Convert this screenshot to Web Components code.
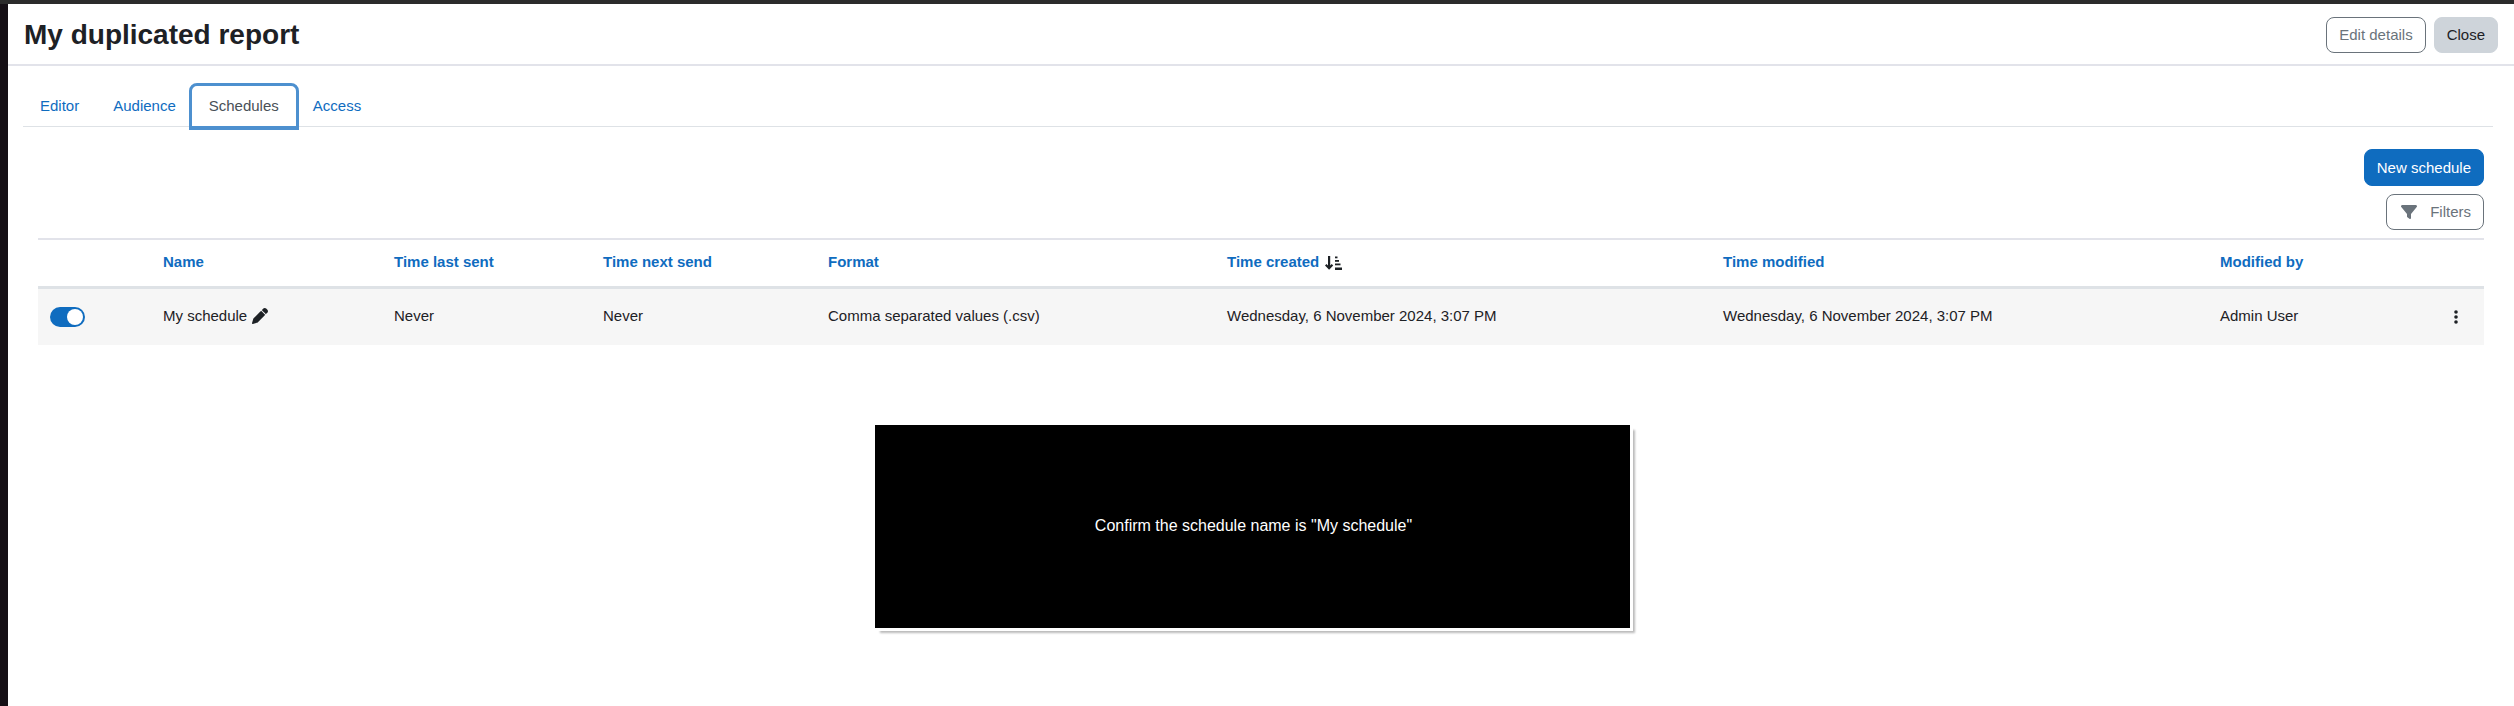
<!DOCTYPE html>
<html>
<head>
<meta charset="utf-8">
<title>My duplicated report</title>
<style>
  html, body { margin: 0; height: 100%; background: #fff; }
  body { font: 15px/22.5px "Liberation Sans", Arial, sans-serif; color: #1d2125; overflow: hidden; }
</style>
</head>
<body>
<app-frame>
  <report-header title-text="My duplicated report"></report-header>
  <report-tabs active="Schedules"></report-tabs>
  <schedule-actions></schedule-actions>
  <schedule-table></schedule-table>
  <caption-box>Confirm the schedule name is "My schedule"</caption-box>
</app-frame>

<script>
const ICONS = {
  pen: '<svg viewBox="0 0 512 512" width="16" height="16" fill="currentColor"><path d="M410.3 231l11.3-11.3-33.9-33.9-62.1-62.1L291.7 89.8l-11.3 11.3-22.6 22.6L58.6 322.9c-10.4 10.4-18 23.3-22.2 37.4L1 480.7c-2.5 8.4-.2 17.5 6.1 23.7s15.3 8.5 23.7 6.1l120.3-35.4c14.1-4.2 27-11.8 37.4-22.2L387.7 253.7 410.3 231zM362.7 18.7L348.3 33.2 325.7 55.8 314.3 67.1l33.9 33.9 62.1 62.1 33.9 33.9 11.3-11.3 22.6-22.6 14.5-14.5c25-25 25-65.5 0-90.5L453.3 18.7c-25-25-65.5-25-90.5 0z"/></svg>',
  filter: '<svg viewBox="0 0 512 512" width="16" height="16" fill="currentColor"><path d="M3.9 54.9C10.5 40.9 24.5 32 40 32H472c15.5 0 29.5 8.9 36.1 22.9s4.5 30.5-5.2 42.5L320 320.9V448c0 12.1-6.8 23.2-17.7 28.6s-23.8 4.3-33.5-3l-64-48c-8.1-6-12.8-15.5-12.8-25.6V320.9L9 97.3C-.7 85.4-2.8 68.8 3.9 54.9z"/></svg>',
  sort: '<svg viewBox="0 0 17 14" width="17" height="14" fill="currentColor"><path d="M3 0h2.2v9.6l1.5-1.5L8.2 9.6 4.1 13.8 0 9.6l1.5-1.5L3 9.6z"/><rect x="10" y="0.5" width="2.5" height="1.8"/><rect x="10" y="4" width="4" height="1.8"/><rect x="10" y="7.5" width="5.5" height="1.8"/><rect x="10" y="11.5" width="7" height="2.5"/></svg>',
  dots: '<svg viewBox="0 0 4 14" width="4" height="14" fill="currentColor"><circle cx="2" cy="2" r="1.8"/><circle cx="2" cy="7" r="1.8"/><circle cx="2" cy="12" r="1.8"/></svg>'
};

class AppFrame extends HTMLElement {
  constructor() {
    super();
    this.attachShadow({ mode: 'open' });
    this.shadowRoot.innerHTML = `
      <style>
        :host { display: block; height: 100vh; border-top: 4px solid #2b2b2b; box-sizing: border-box; }
        .wrap { display: flex; height: 100%; }
        .side { width: 8px; flex: none; background: #150f15; }
        .main { flex: 1; min-width: 0; }
      </style>
      <div class="wrap"><div class="side"></div><div class="main"><slot></slot></div></div>
    `;
  }
}

class ReportHeader extends HTMLElement {
  constructor() {
    super();
    this.attachShadow({ mode: 'open' });
  }
  connectedCallback() {
    this.shadowRoot.innerHTML = `
      <style>
        :host { display: flex; align-items: center; justify-content: space-between; height: 62px; box-sizing: border-box;
                padding: 2px 16px 0; border-bottom: 2px solid #e2e3ea; }
        h1 { margin: 0; font-size: 28px; line-height: 34px; font-weight: 700; color: #1d2125; }
        .btns { display: flex; gap: 8px; }
        .btn { box-sizing: border-box; height: 36px; line-height: 34px; border-radius: 8px; border: 1px solid #6a737b; padding: 0 12px; color: #6a737b; background: #fff; }
        .btn.sec { background: #ced4da; border-color: #ced4da; color: #1d2125; }
      </style>
      <h1>${this.getAttribute('title-text')}</h1>
      <div class="btns"><div class="btn">Edit details</div><div class="btn sec">Close</div></div>
    `;
  }
}

class ReportTabs extends HTMLElement {
  constructor() {
    super();
    this.attachShadow({ mode: 'open' });
  }
  connectedCallback() {
    const active = this.getAttribute('active');
    const items = ['Editor', 'Audience', 'Schedules', 'Access'].map(t =>
      `<div class="tab${t === active ? ' active' : ''}">${t}</div>`).join('');
    this.shadowRoot.innerHTML = `
      <style>
        :host { display: flex; margin: 15px 21px 0 15px; height: 45px; border-bottom: 1px solid #dee2e6; }
        .tab { padding: 0 17px; line-height: 50px; color: #0f6cbf; height: 45px; }
        /* focus ring hangs over the line below and the neighbouring tabs */
        .active { box-sizing: border-box; color: #495057; height: 47px; line-height: 40px; margin: 2px -3px 0 -4px; padding: 0 17px;
                  border: 3px solid #4d90cf; border-bottom-width: 4px; border-radius: 8px 8px 0 0; }
      </style>
      ${items}
    `;
  }
}

class ScheduleActions extends HTMLElement {
  constructor() {
    super();
    this.attachShadow({ mode: 'open' });
    this.shadowRoot.innerHTML = `
      <style>
        :host { display: flex; flex-direction: column; align-items: flex-end; gap: 8px; margin: 22px 30px 8px 30px; }
        .btn { box-sizing: border-box; height: 37px; line-height: 35px; border-radius: 8px; padding: 0 12px; border: 1px solid #0f6cbf; background: #0f6cbf; color: #fff; }
        .filters { height: 36px; line-height: 34px; background: #fff; border-color: #6a737b; color: #6a737b; display: flex; align-items: center; gap: 13px; padding: 0 12px 0 14px; }
        svg { display: block; }
      </style>
      <div class="btn">New schedule</div>
      <div class="btn filters">${ICONS.filter}<span>Filters</span></div>
    `;
  }
}

class ScheduleTable extends HTMLElement {
  constructor() {
    super();
    this.attachShadow({ mode: 'open' });
    this.shadowRoot.innerHTML = `
      <style>
        :host { display: block; margin: 0 30px; }
        .grid { display: grid; grid-template-columns: 125px 231px 209px 225px 399px 496px 497px 1fr 50px; }
        .grid > div { display: flex; align-items: center; }
        .head { height: 45px; padding-bottom: 1px; border-top: 2px solid #e2e3ea; border-bottom: 3px solid #dee2e6; font-weight: 700; color: #0f6cbf; }
        .cell { height: 54px; padding-bottom: 2px; background: #f6f6f6; }
        svg { display: block; color: #1d2125; }
        .sort { margin-left: 6px; }
        .pen { margin-left: 5px; margin-top: -1px; }
        .toggle { box-sizing: border-box; width: 35px; height: 20px; margin: 2px 0 0 12px; border-radius: 10px; background: #0f6cbf; display: flex; justify-content: flex-end; align-items: center; padding-right: 2px; }
        .knob { width: 16px; height: 16px; border-radius: 50%; background: #fff; }
        .dots { margin-left: 20px; margin-top: 2px; }
      </style>
      <div class="grid">
        <div class="head"></div>
        <div class="head">Name</div>
        <div class="head">Time last sent</div>
        <div class="head">Time next send</div>
        <div class="head">Format</div>
        <div class="head">Time created<span class="sort">${ICONS.sort}</span></div>
        <div class="head">Time modified</div>
        <div class="head">Modified by</div>
        <div class="head"></div>
        <div class="cell"><div class="toggle"><div class="knob"></div></div></div>
        <div class="cell">My schedule<span class="pen">${ICONS.pen}</span></div>
        <div class="cell">Never</div>
        <div class="cell">Never</div>
        <div class="cell">Comma separated values (.csv)</div>
        <div class="cell">Wednesday, 6 November 2024, 3:07 PM</div>
        <div class="cell">Wednesday, 6 November 2024, 3:07 PM</div>
        <div class="cell">Admin User</div>
        <div class="cell"><span class="dots">${ICONS.dots}</span></div>
      </div>
    `;
  }
}

class CaptionBox extends HTMLElement {
  constructor() {
    super();
    this.attachShadow({ mode: 'open' });
    this.shadowRoot.innerHTML = `
      <style>
        :host { display: flex; align-items: center; justify-content: center; box-sizing: border-box; width: 755px; height: 203px;
                margin: 80px 0 0 867px; padding-left: 2px; background: #000; color: #fff; font-size: 16px;
                box-shadow: 3px 3px 0 #fff, 5px 5px 2px #bbb; }
      </style>
      <slot></slot>
    `;
  }
}

customElements.define('app-frame', AppFrame);
customElements.define('report-header', ReportHeader);
customElements.define('report-tabs', ReportTabs);
customElements.define('schedule-actions', ScheduleActions);
customElements.define('schedule-table', ScheduleTable);
customElements.define('caption-box', CaptionBox);
</script>
</body>
</html>
